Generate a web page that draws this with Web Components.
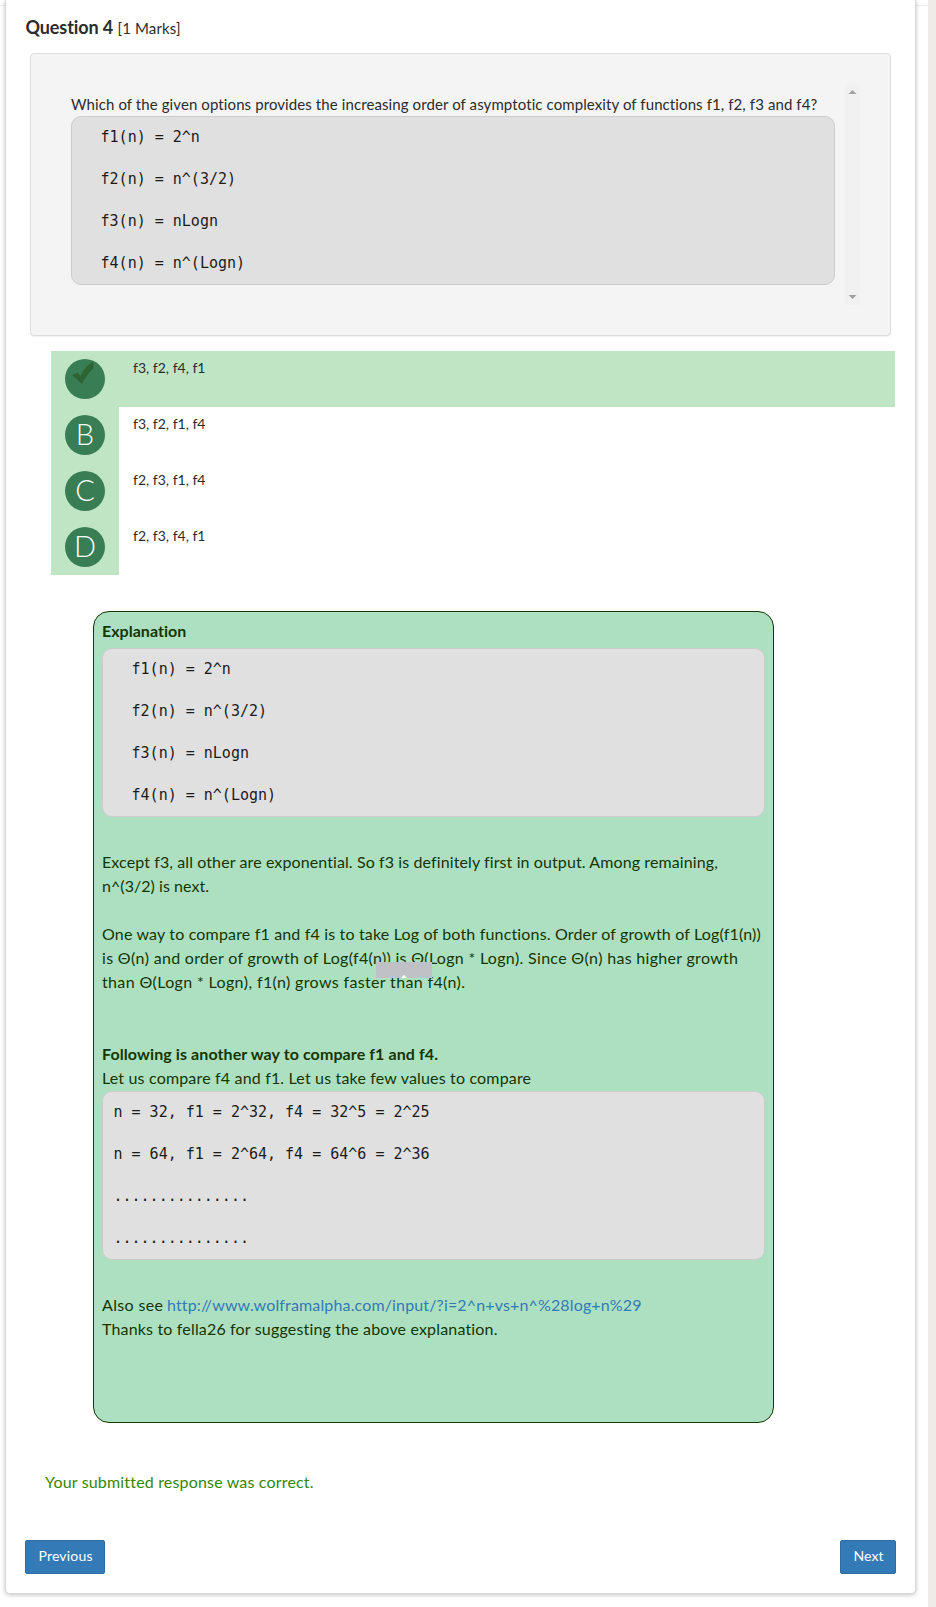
<!DOCTYPE html>
<html lang="en">
<head>
<meta charset="utf-8">
<title>Question 4</title>
<style>
html,body{margin:0;padding:0;background:#fff}
body{font-family:Lato,"Open Sans",sans-serif;color:#2c2c2c;height:1607px;overflow:hidden}
</style>
</head>
<body>
<quiz-page></quiz-page>
<script>
/* One line of text, tracked so that it spans the given width. */
class TextLine extends HTMLElement{
  connectedCallback(){
    const root=this.attachShadow({mode:'open'});
    root.innerHTML='<style>:host{display:block;white-space:nowrap;height:var(--lh,24px);line-height:var(--lh,24px)}span{display:inline-block}</style><span><slot></slot></span>';
    const s=root.querySelector('span'),w=parseFloat(this.getAttribute('w'));
    const n=this.textContent.length;
    if(w&&n>1)s.style.letterSpacing=((w-s.getBoundingClientRect().width)/(n-1))+'px';
    if(w)s.style.width=w+'px';
  }
}
class CodeBlock extends HTMLElement{
  constructor(){super();this.attachShadow({mode:'open'}).innerHTML=`<style>
  :host{display:block;box-sizing:border-box;height:169px;padding:9.5px 9.5px 9.5px 10.5px;border:1px solid #ccc;border-radius:10px;background:#e0e0e0;color:#1b1b1b;font:15px/21px "DejaVu Sans Mono",monospace;white-space:pre}
  </style><slot></slot>`}
}
class ScrollTrack extends HTMLElement{
  constructor(){super();this.attachShadow({mode:'open'}).innerHTML=`<style>
  :host{display:flex;flex-direction:column;justify-content:space-between;width:15px;height:221px;background:#f1f1f1}svg{display:block}
  </style><svg width="15" height="16"><path d="M3.5 10 7.5 6 11.5 10Z" fill="#a0a0a0"/></svg><svg width="15" height="16"><path d="M3.5 6 7.5 10 11.5 6Z" fill="#a0a0a0"/></svg>`}
}
class AnswerOption extends HTMLElement{
  connectedCallback(){
    const ok=this.hasAttribute('correct');
    this.attachShadow({mode:'open'}).innerHTML=`<style>
    :host{display:flex;height:56px;${ok?'background:#c0e5c5':''}}
    .key{width:68px;height:56px;background:#c0e5c5;display:flex;justify-content:center;align-items:center}
    .dot{width:40px;height:40px;border-radius:50%;background:#387d54;color:#fff;font-size:29px;font-weight:300;line-height:37px;text-align:center}
    .dot svg{display:block}
    .txt{padding:5px 0 0 14px;font-size:14px;--lh:24px}
    </style><div class="key"><div class="dot">${ok?'<svg width="40" height="40"><path d="M7.3 16.3 12.3 13.7 15.7 17Q18 11 22.3 7L28.3 2.3V9.3Q22 15 17 25Z" fill="#2d6431"/></svg>':this.getAttribute('key')}</div></div><div class="txt"><slot></slot></div>`;
  }
}
class ExplanationCard extends HTMLElement{
  constructor(){super();this.attachShadow({mode:'open'}).innerHTML=`<style>
  :host{display:block;position:relative;box-sizing:border-box;width:681px;height:812px;border:1px solid #143601;border-radius:16px;background:#ade0c1;color:#143601;font-size:16px;padding:7px 8px 0}
  .chip{position:absolute;left:282px;top:350px;width:56px;height:16px;background:#bfc1c7}
  .chip svg{display:block;margin:13px 0 0 24.5px}
  </style><slot></slot><div class="chip"><svg width="6" height="3"><path d="M0 3 2 .7 3 0 4 .7 6 3Z" fill="#fff"/></svg></div>`}
}
class NavButton extends HTMLElement{
  constructor(){super();this.attachShadow({mode:'open'}).innerHTML=`<style>
  :host{display:block;box-sizing:border-box;height:34px;padding:3px 0 0 12.5px;border:1px solid #2e6da4;border-radius:2px;background:#337ab7;color:#fff;font-size:14px}
  </style><slot></slot>`}
}
class QuizPage extends HTMLElement{
  constructor(){super();this.attachShadow({mode:'open'}).innerHTML=`<style>
  :host{display:flex;height:1607px;background:#fff}
  .gutter{height:5px;border-bottom:1px solid #eee;box-sizing:content-box}
  .l{width:5px}.r{flex:1;border-radius:0 0 4px 0}
  .panel{position:relative;box-sizing:border-box;width:911px;height:1594px;border:1px solid #d9d9d9;border-top:0;border-radius:0 0 5px 5px;background:#fff;box-shadow:0 1px 4px rgba(0,0,0,.25)}
  .strip{width:8px;background:#efebe8}
  .head{display:flex;padding:15px 0 0 19.5px;height:37px;box-sizing:border-box}
  .head b{display:block;font-size:18px;width:92px}
  .head .m{font-size:15px;padding-top:1px}
  .q{margin:16px 0 0 24px;box-sizing:border-box;width:861px;height:283px;border:1px solid #ddd;border-radius:4px;background:#f4f4f4;box-shadow:0 1px 1px rgba(0,0,0,.05);display:flex;padding:30px 0 0 40px}
  .body{width:764px;padding-top:9px;margin-right:10px;font-size:15px}
  .opts{margin:15px 0 0 45px;width:844px}
  explanation-card{margin:36px 0 0 87px}
  .res{margin:47px 0 0 39px;color:#338703;font-size:16px}
  .nav{display:flex;justify-content:space-between;margin:46px 19px 0 19px}
  nav-button:first-child{width:80px}nav-button:last-child{width:56px}
  .row{display:flex;gap:4px}
  a{color:#337ab7;text-decoration:none}
  .g1{height:33px}
  </style>
  <div class="gutter l"></div>
  <div class="panel">
   <div class="head"><b><text-line w="88">Question 4</text-line></b><div class="m"><text-line w="63">[1 Marks]</text-line></div></div>
   <div class="q"><div class="body"><text-line w="747" style="--lh:23px">Which of the given options provides the increasing order of asymptotic complexity of functions f1, f2, f3 and f4?</text-line>
<code-block>  f1(n) = 2^n

  f2(n) = n^(3/2)

  f3(n) = nLogn

  f4(n) = n^(Logn)</code-block></div><scroll-track></scroll-track></div>
   <div class="opts">
    <answer-option correct><text-line w="72.5">f3, f2, f4, f1</text-line></answer-option>
    <answer-option key="B"><text-line w="72.5">f3, f2, f1, f4</text-line></answer-option>
    <answer-option key="C"><text-line w="72.5">f2, f3, f1, f4</text-line></answer-option>
    <answer-option key="D"><text-line w="72.5">f2, f3, f4, f1</text-line></answer-option>
   </div>
   <explanation-card>
    <text-line w="84.5" style="font-weight:700;height:29px">Explanation</text-line>
<code-block>  f1(n) = 2^n

  f2(n) = n^(3/2)

  f3(n) = nLogn

  f4(n) = n^(Logn)</code-block>
    <div class="g1"></div>
    <text-line w="615.5">Except f3, all other are exponential. So f3 is definitely first in output. Among remaining,</text-line>
    <text-line w="107">n^(3/2) is next.</text-line>
    <div style="height:24px"></div>
    <text-line w="659">One way to compare f1 and f4 is to take Log of both functions. Order of growth of Log(f1(n))</text-line>
    <text-line w="636">is Θ(n) and order of growth of Log(f4(n)) is Θ(Logn * Logn). Since Θ(n) has higher growth</text-line>
    <text-line w="363">than Θ(Logn * Logn), f1(n) grows faster than f4(n).</text-line>
    <div style="height:48px"></div>
    <text-line w="336" style="font-weight:700">Following is another way to compare f1 and f4.</text-line>
    <text-line w="429" style="height:25px">Let us compare f4 and f1. Let us take few values to compare</text-line>
<code-block>n = 32, f1 = 2^32, f4 = 32^5 = 2^25

n = 64, f1 = 2^64, f4 = 64^6 = 2^36

...............

...............</code-block>
    <div class="g1"></div>
    <div class="row"><text-line w="61">Also see</text-line><a href="#"><text-line w="474">http://www.wolframalpha.com/input/?i=2^n+vs+n^%28log+n%29</text-line></a></div>
    <text-line w="396">Thanks to fella26 for suggesting the above explanation.</text-line>
   </explanation-card>
   <div class="res"><text-line w="268">Your submitted response was correct.</text-line></div>
   <div class="nav"><nav-button><text-line w="54">Previous</text-line></nav-button><nav-button><text-line w="30">Next</text-line></nav-button></div>
  </div>
  <div class="gutter r"></div><div class="strip"></div>`}
}
customElements.define('nav-button',NavButton);
customElements.define('explanation-card',ExplanationCard);
customElements.define('answer-option',AnswerOption);
customElements.define('scroll-track',ScrollTrack);
customElements.define('code-block',CodeBlock);
customElements.define('quiz-page',QuizPage);
customElements.define('text-line',TextLine);
</script>
</body>
</html>
